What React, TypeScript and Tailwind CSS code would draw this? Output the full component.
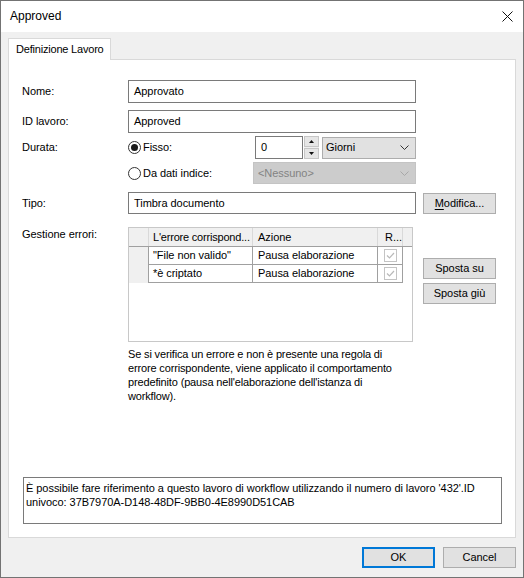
import React from "react";

const Chevron = ({ color = "#333" }: { color?: string }) => (
  <svg width="9" height="5" viewBox="0 0 9 5" className="block">
    <path d="M0.5 0.5 L4.5 4.5 L8.5 0.5" fill="none" stroke={color} strokeWidth="1" />
  </svg>
);

const Radio = ({ checked }: { checked?: boolean }) => (
  <span className="w-[13px] h-[13px] rounded-full border border-[#333333] bg-white flex items-center justify-center shrink-0">
    {checked && <span className="w-[7px] h-[7px] rounded-full bg-[#1a1a1a]" />}
  </span>
);

const Check = () => (
  <span className="w-[13px] h-[13px] border border-[#c4c4c4] bg-white flex items-center justify-center">
    <svg width="9" height="7" viewBox="0 0 9 7">
      <path d="M1 3.5 L3.5 6 L8 1" fill="none" stroke="#b9b9b9" strokeWidth="1.2" />
    </svg>
  </span>
);

const Btn = ({ children, primary }: { children: React.ReactNode; primary?: boolean }) => (
  <div
    className={
      "w-[73px] h-[21px] bg-[#e1e1e1] flex items-center justify-center " +
      (primary ? "border-2 border-[#0078d7]" : "border border-[#adadad]")
    }
  >
    {children}
  </div>
);

export default function App() {
  return (
    <div className="w-[524px] h-[578px] border border-[#737373] bg-[#f0f0f0] flex flex-col text-[11px] leading-[13px] text-black font-['Liberation_Sans',Arial,sans-serif] tracking-[-0.05px]">
      {/* Title bar */}
      <div className="h-[31px] bg-white flex items-center justify-between pl-[9px] pr-[10px] shrink-0">
        <span className="text-[12px] tracking-normal">Approved</span>
        <svg width="11" height="11" viewBox="0 0 11 11">
          <path d="M0.5 0.5 L10.5 10.5 M10.5 0.5 L0.5 10.5" stroke="#111" strokeWidth="1" fill="none" />
        </svg>
      </div>

      {/* Body */}
      <div className="pl-[7px] pr-[7px] pt-[6px] flex flex-col">
        {/* tab header */}
        <div className="flex">
          <div className="relative z-10 -mb-px h-[22px] w-[103px] border border-b-0 border-[#d9d9d9] bg-white pl-[7px] flex items-center whitespace-nowrap tracking-[-0.2px]">
            Definizione Lavoro
          </div>
        </div>
        {/* panel */}
        <div className="h-[479px] border border-[#d9d9d9] bg-white flex flex-col">
          <div className="pl-[13px] pt-[20px] flex flex-col">
            {/* Nome */}
            <div className="flex items-center h-[23px]">
              <div className="w-[106px]">Nome:</div>
              <div className="w-[288px] h-[23px] border border-[#7a7a7a] flex items-center pl-[5px]">Approvato</div>
            </div>
            {/* ID */}
            <div className="flex items-center h-[23px] mt-[7px]">
              <div className="w-[106px]">ID lavoro:</div>
              <div className="w-[288px] h-[23px] border border-[#7a7a7a] flex items-center pl-[5px]">Approved</div>
            </div>
            {/* Durata */}
            <div className="flex items-center h-[23px] mt-[3px]">
              <div className="w-[106px]">Durata:</div>
              <div className="w-[127px] flex items-center gap-[2px]">
                <Radio checked />
                <span>Fisso:</span>
              </div>
              <div className="w-[48px] h-[23px] border border-[#7a7a7a] flex items-center pl-[5px]">0</div>
              <div className="ml-[1px] w-[15px] h-[23px] flex flex-col gap-[1px] bg-[#f0f0f0]">
                <div className="h-[11px] border border-[#c6c6c6] bg-[#e6e6e6] flex items-center justify-center">
                  <svg width="5" height="3" viewBox="0 0 5 3"><path d="M0 3 L2.5 0 L5 3 Z" fill="#111" /></svg>
                </div>
                <div className="h-[11px] border border-[#c6c6c6] bg-[#e6e6e6] flex items-center justify-center">
                  <svg width="5" height="3" viewBox="0 0 5 3"><path d="M0 0 L2.5 3 L5 0 Z" fill="#111" /></svg>
                </div>
              </div>
              <div className="ml-[3px] w-[94px] h-[22px] border border-[#adadad] bg-[#e1e1e1] flex items-center justify-between pl-[3px] pr-[6px]">
                <span>Giorni</span>
                <Chevron />
              </div>
            </div>
            {/* Da dati indice */}
            <div className="flex items-center h-[22px] mt-[3px]">
              <div className="w-[106px]" />
              <div className="w-[125px] flex items-center gap-[2px]">
                <Radio />
                <span>Da dati indice:</span>
              </div>
              <div className="w-[163px] h-[22px] border border-[#c4c4c4] bg-[#cccccc] flex items-center justify-between pl-[4px] pr-[6px] text-[#838383]">
                <span>&lt;Nessuno&gt;</span>
                <Chevron color="#a8a8a8" />
              </div>
            </div>
            {/* Tipo */}
            <div className="flex items-center h-[22px] mt-[8px]">
              <div className="w-[106px]">Tipo:</div>
              <div className="w-[288px] h-[22px] border border-[#7a7a7a] flex items-center pl-[5px]">Timbra documento</div>
              <div className="ml-[7px]">
                <Btn>
                  <span><span className="underline underline-offset-2">M</span>odifica...</span>
                </Btn>
              </div>
            </div>
            {/* Gestione errori */}
            <div className="flex mt-[13px]">
              <div className="w-[106px] pt-[1px]">Gestione errori:</div>
              <div className="w-[285px] h-[115px] border border-[#c8c8c8] bg-white flex flex-col">
                {/* header */}
                <div className="flex h-[19px] bg-[#f0f0f0] border-b border-[#a0a0a0]">
                  <div className="w-[20px] border-r border-[#d9d9d9]" />
                  <div className="w-[104px] border-r border-[#d9d9d9] pl-[4px] flex items-center whitespace-nowrap overflow-hidden tracking-[-0.2px]">L'errore corrispond...</div>
                  <div className="w-[125px] border-r border-[#d9d9d9] pl-[5px] flex items-center">Azione</div>
                  <div className="w-[25px] border-r border-[#d9d9d9] pl-[7px] flex items-center">R...</div>
                  <div className="flex-1" />
                </div>
                {[['"File non valido"', "Pausa elaborazione"], ["*è criptato", "Pausa elaborazione"]].map((r, i) => (
                  <div key={i} className="flex h-[18px]">
                    <div className="w-[20px] bg-[#f0f0f0] border-r border-[#a0a0a0]" />
                    <div className="w-[104px] border-r border-b border-[#a0a0a0] pl-[4px] flex items-center whitespace-nowrap">{r[0]}</div>
                    <div className="w-[125px] border-r border-b border-[#a0a0a0] pl-[5px] flex items-center whitespace-nowrap">{r[1]}</div>
                    <div className="w-[25px] border-r border-b border-[#a0a0a0] flex items-center justify-center">
                      <Check />
                    </div>
                    <div className="flex-1" />
                  </div>
                ))}
              </div>
              <div className="ml-[10px] pt-[31px] flex flex-col gap-[4px]">
                <Btn>Sposta su</Btn>
                <Btn>Sposta giù</Btn>
              </div>
            </div>
            {/* description */}
            <div className="ml-[106px] mt-[5px] whitespace-nowrap leading-[14px] tracking-[-0.15px]">
              Se si verifica un errore e non è presente una regola di
              <br />
              errore corrispondente, viene applicato il comportamento
              <br />
              predefinito (pausa nell'elaborazione dell'istanza di
              <br />
              workflow).
            </div>
          </div>
          {/* info box */}
          <div className="mt-auto mb-[13px] ml-[14px] w-[479px] h-[47px] border border-[#7a7a7a] pl-[2px] pt-[3px] whitespace-nowrap leading-[14px]">
            È possibile fare riferimento a questo lavoro di workflow utilizzando il numero di lavoro '432'.ID
            <br />
            univoco: 37B7970A-D148-48DF-9BB0-4E8990D51CAB
          </div>
        </div>
        {/* buttons */}
        <div className="flex justify-end gap-[8px] mt-[9px]">
          <Btn primary>OK</Btn>
          <Btn>Cancel</Btn>
        </div>
      </div>
    </div>
  );
}
